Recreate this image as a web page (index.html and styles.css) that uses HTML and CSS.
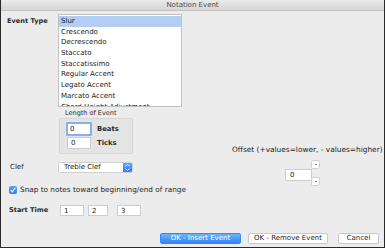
FILE: index.html
```html
<!DOCTYPE html>
<html>
<head>
<meta charset="utf-8">
<link rel="stylesheet" href="styles.css">
</head>
<body>
<div class="win">
  <div class="titlebar">Notation Event</div>
  <div class="content">
    <div class="type-row">
      <div class="label strong type-label">Event Type</div>
      <div class="list">
        <div class="item selected">Slur</div>
        <div class="item">Crescendo</div>
        <div class="item">Decrescendo</div>
        <div class="item">Staccato</div>
        <div class="item">Staccatissimo</div>
        <div class="item">Regular Accent</div>
        <div class="item">Legato Accent</div>
        <div class="item">Marcato Accent</div>
        <div class="item">Chord Height Adjustment</div>
      </div>
    </div>
    <div class="mid">
      <div class="mid-left">
        <div class="length">
          <div class="length-cap">Length of Event</div>
          <div class="length-box">
            <div class="length-row">
              <div class="field focus">0</div>
              <span class="length-lbl">Beats</span>
            </div>
            <div class="length-row">
              <div class="field small">0</div>
              <span class="length-lbl">Ticks</span>
            </div>
          </div>
        </div>
        <div class="clef-row">
          <span class="label clef-label">Clef</span>
          <div class="select">
            <span class="select-text">Treble Clef</span>
            <span class="select-arrow">
              <svg width="9" height="11" viewBox="0 0 9 11"><path d="M2.6 4.3 L4.5 2.6 L6.4 4.3 M2.6 6.7 L4.5 8.4 L6.4 6.7" fill="none" stroke="#fff" stroke-width="0.9"/></svg>
            </span>
          </div>
        </div>
        <div class="check-row">
          <span class="checkbox">
            <svg width="8" height="8" viewBox="0 0 8 8"><path d="M1.8 4.1 L3.3 5.8 L6.3 1.8" fill="none" stroke="#fff" stroke-width="1.1"/></svg>
          </span>
          <span class="label check-lbl">Snap to notes toward beginning/end of range</span>
        </div>
      </div>
      <div class="mid-right">
        <div class="label offset-lbl">Offset (+values=lower, - values=higher)</div>
        <div class="stepper">
          <div class="field offset-field">0</div>
          <div class="step-btns">
            <span class="step-btn"><span class="step-mark"></span></span>
            <span class="step-btn"><span class="step-mark"></span></span>
          </div>
        </div>
      </div>
    </div>
    <div class="start-row">
      <span class="label strong start-label">Start Time</span>
      <div class="field st1">1</div>
      <div class="field st2">2</div>
      <div class="field st3">3</div>
    </div>
    <div class="buttons">
      <div class="btn primary">OK - Insert Event</div>
      <div class="btn remove">OK - Remove Event</div>
      <div class="btn cancel">Cancel</div>
    </div>
  </div>
</div>
</body>
</html>
```

FILE: styles.css
```css
* { box-sizing: border-box; }
html, body { margin: 0; padding: 0; background: #ececec; }
body { font-family: "DejaVu Sans", "Liberation Sans", sans-serif; font-size: 7px; color: #1e1e1e; }

.win {
  width: 385px;
  height: 248px;
  background: #ececec;
  border-left: 1px solid #2a2a2a;
  border-right: 1px solid #2a2a2a;
  border-bottom: 1px solid #2a2a2a;
  overflow: hidden;
}

.titlebar {
  height: 11px;
  line-height: 10px;
  text-align: center;
  color: #4a4a4a;
  font-size: 7px;
  background: linear-gradient(#ebebeb, #d5d5d5);
  border-bottom: 1px solid #c4c4c4;
}

.content { padding-left: 6px; }

.label { line-height: 9px; white-space: nowrap; }
.strong { font-weight: bold; color: #2a2a2a; }

.type-row { display: flex; margin-top: 3px; }
.type-label { width: 51px; padding-top: 3px; font-size: 6.6px; }

.list {
  width: 124px;
  height: 93px;
  background: #fff;
  border: 1px solid #c2c2c2;
  padding-top: 1px;
  overflow: hidden;
}
.item { height: 10.7px; line-height: 10.7px; padding-left: 2px; white-space: nowrap; color: #1a1a1a; }
.item.selected { background: #b3cdf3; }

.mid { display: flex; }
.mid-left { display: flex; flex-direction: column; width: 225px; flex: none; }

.length { margin-left: 52px; margin-top: 2px; }
.length-cap { line-height: 9px; padding-left: 6px; font-size: 6.5px; color: #2a2a2a; }
.length-box {
  width: 74px;
  height: 36px;
  background: #e4e4e4;
  border: 1px solid #d6d6d6;
  border-radius: 2px;
  padding: 3px 0 0 6px;
  display: flex;
  flex-direction: column;
  gap: 1px;
}
.length-row { display: flex; align-items: center; }
.length-lbl { font-weight: bold; color: #2a2a2a; font-size: 6.8px; }

.field {
  width: 24px;
  height: 12px;
  line-height: 10px;
  background: #fff;
  border: 1px solid #cdcdcd;
  padding-left: 3px;
  color: #1a1a1a;
}
.field.focus {
  width: 26px;
  height: 14px;
  border: 2px solid #86b0ec;
  border-radius: 1px;
  padding-left: 2px;
  margin-right: 5px;
}
.field.small { margin-left: 1px; margin-right: 6px; }

.clef-row { display: flex; align-items: center; margin-top: 8px; }
.clef-label { width: 51px; padding-left: 3px; }
.select {
  width: 75px;
  height: 11px;
  display: flex;
  background: #fff;
  border: 1px solid #d0d0d0;
  border-radius: 2px;
  overflow: hidden;
}
.select-text { flex: 1; padding-left: 5px; line-height: 9px; }
.select-arrow {
  width: 9px;
  background: linear-gradient(#63a5f9, #2d7ff0);
  display: flex;
}
.select-arrow svg { margin-top: -1px; }

.check-row { display: flex; align-items: center; margin-top: 12px; margin-left: 2px; gap: 3px; }
.check-lbl { font-size: 7.3px; }
.checkbox {
  width: 8px;
  height: 8px;
  border-radius: 2px;
  background: linear-gradient(#5aa2f8, #2f80ef);
  display: flex;
}

.mid-right { display: flex; flex-direction: column; }
.offset-lbl { margin-top: 38px; font-size: 7.4px; }
.stepper { display: flex; margin-left: 53px; margin-top: 6px; }
.offset-field { width: 27px; height: 12px; margin-top: 9px; padding-left: 4px; }
.step-btns { display: flex; flex-direction: column; gap: 8px; margin-left: -1px; }
.step-btn {
  width: 9px;
  height: 9px;
  background: #fff;
  border: 1px solid #d2d2d2;
  border-radius: 2px;
  display: flex;
  align-items: center;
  justify-content: center;
}
.step-mark { width: 2px; height: 1px; background: #8a8a8a; }

.start-row { display: flex; align-items: center; margin-top: 11px; }
.start-label { width: 53px; padding-left: 2px; font-size: 6.6px; }
.st1 { width: 24px; height: 11px; }
.st2 { width: 20px; height: 11px; margin-left: 4px; }
.st3 { width: 24px; height: 11px; margin-left: 9px; }

.buttons { display: flex; justify-content: flex-end; margin-top: 17px; margin-right: 5px; gap: 7px; }
.btn {
  height: 11px;
  line-height: 9px;
  text-align: center;
  background: #fff;
  border: 1px solid #c9c9c9;
  border-radius: 2px;
  color: #1e1e1e;
}
.btn.primary {
  width: 81px;
  background: linear-gradient(#6db4fb, #2f86f2);
  border-color: #3a88ee;
  color: #fff;
}
.btn.remove { width: 80px; }
.btn.cancel { width: 41px; margin-left: 3px; }
```
